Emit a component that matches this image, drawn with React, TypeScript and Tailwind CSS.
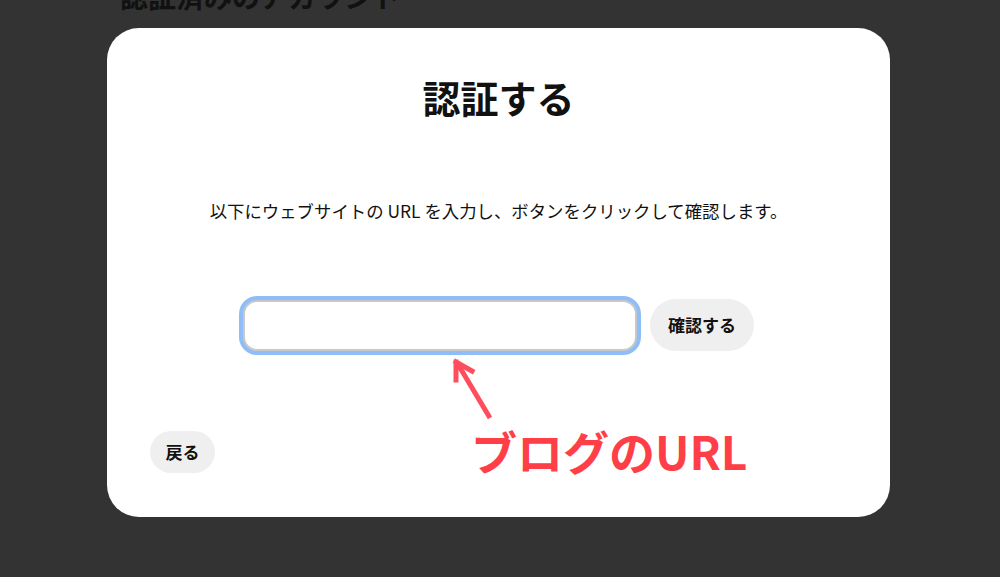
export default function App() {
  return (
    <div
      className="relative h-[577px] w-[1000px] overflow-hidden bg-[#333333]"
      style={{ fontFamily: '"Noto Sans CJK JP", "Noto Sans", sans-serif' }}
    >
      <h2 className="-mt-[24px] ml-[120px] h-[52px] text-[28px] font-bold leading-[40px] text-[#111]">
        認証済みのアカウント
      </h2>
      <div className="relative ml-[107px] h-[489px] w-[783px] rounded-[32px] bg-white">
        <div className="flex flex-col items-center pt-[45px]">
          <h1 className="text-[38px] font-bold leading-[48px] text-[#111]">認証する</h1>
          <p className="mt-[78px] text-[17.4px] leading-[24px] text-[#111]">
            以下にウェブサイトの URL を入力し、ボタンをクリックして確認します。
          </p>
          <div className="mt-[76px] flex items-center gap-[13px]">
            <input
              type="text"
              aria-label="URL"
              className="h-[51px] w-[394px] rounded-[14px] border-2 border-[#c8c8c8] bg-white px-4 outline-none ring-4 ring-[#8fbdf7]"
            />
            <button className="h-[52px] w-[104px] rounded-full bg-[#efefef] text-[17px] font-bold text-[#111]">
              確認する
            </button>
          </div>
        </div>
        <button className="absolute bottom-[44px] left-[43px] h-[42px] w-[65px] rounded-full bg-[#efefef] text-[17px] font-bold text-[#111]">
          戻る
        </button>
        <svg
          className="absolute left-[343px] top-[330px]"
          width="50"
          height="65"
          viewBox="0 0 50 65"
          fill="none"
        >
          <path d="M40 60 L9 8" stroke="#ff4d5e" strokeWidth="5" />
          <path d="M6 4 L6 22 M6 4 L22 13" stroke="#ff4d5e" strokeWidth="5" strokeLinecap="square" />
        </svg>
        <div className="absolute left-[364px] top-[392px] text-[46px] font-bold leading-[60px] text-[#ff3f47]">
          ブログのURL
        </div>
      </div>
    </div>
  );
}
